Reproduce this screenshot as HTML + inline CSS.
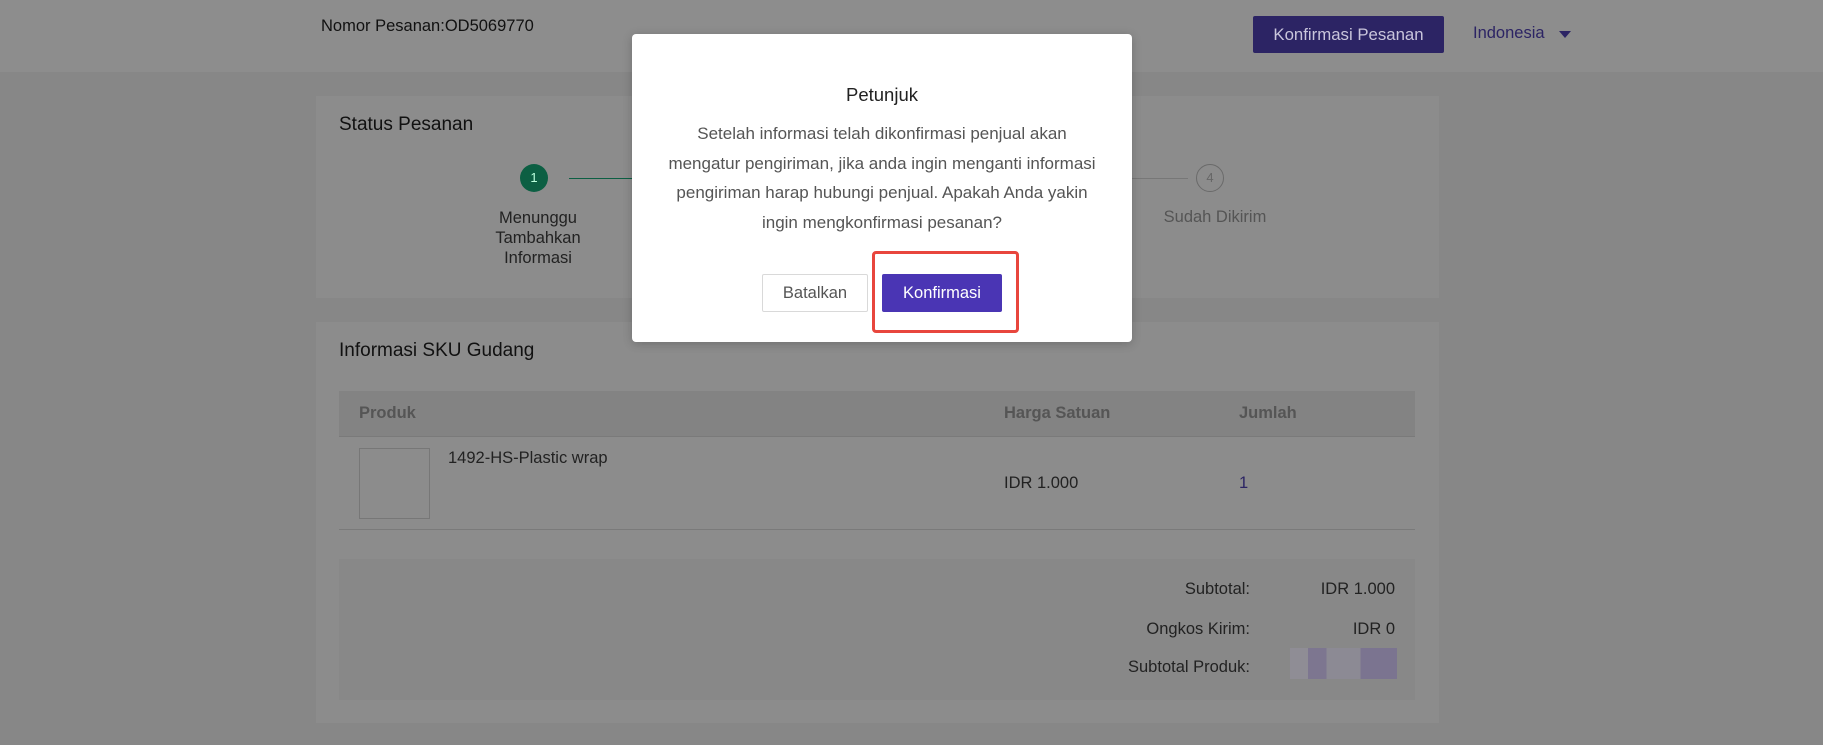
<!DOCTYPE html>
<html><head><meta charset="utf-8"><style>
*{margin:0;padding:0;box-sizing:border-box}
body{width:1823px;height:745px;background:#878787;font-family:"Liberation Sans",Arial,sans-serif;position:relative;overflow:hidden;color:#111}
.a{position:absolute;white-space:nowrap}
.hdr{position:absolute;left:0;top:0;width:1823px;height:72px;background:#8d8d8d}
.card{position:absolute;left:316px;width:1123px;background:#8c8c8c}
.circ{position:absolute;width:28px;height:28px;border-radius:50%;font-size:13px;text-align:center;line-height:28px}
.modal{position:absolute;left:632px;top:34px;width:500px;height:308px;background:#fff;border-radius:4px;box-shadow:0 2px 10px rgba(0,0,0,.2)}
</style></head><body>
<div class="hdr"></div>
<div class="a" style="left:321px;top:17px;font-size:16.5px;color:#111">Nomor Pesanan:OD5069770</div>
<div class="a" style="left:1253px;top:16px;width:191px;height:37px;background:#2c2464;color:#c9c5dc;font-size:16.8px;text-align:center;line-height:37px;border-radius:2px">Konfirmasi Pesanan</div>
<div class="a" style="left:1473px;top:24px;font-size:16.5px;color:#2c2464">Indonesia</div>
<div class="a" style="left:1559px;top:31px;width:0;height:0;border-left:6px solid transparent;border-right:6px solid transparent;border-top:7px solid #2c2464"></div>

<div class="card" style="top:96px;height:202px"></div>
<div class="a" style="left:339px;top:114px;font-size:19px;color:#111">Status Pesanan</div>
<div class="circ" style="left:520px;top:164px;background:#0c5f43;color:#bfd">1</div>
<div class="a" style="left:569px;top:178px;width:64px;height:1px;background:#0c5f43"></div>
<div class="a" style="left:1132px;top:178px;width:56px;height:1px;background:#777"></div>
<div class="circ" style="left:1196px;top:164px;border:1.5px solid #6a6a6a;color:#666;line-height:25px">4</div>
<div class="a" style="left:478px;top:208px;width:120px;text-align:center;font-size:16.5px;line-height:20px;color:#222;white-space:normal">Menunggu<br>Tambahkan<br>Informasi</div>
<div class="a" style="left:1155px;top:208px;width:120px;text-align:center;font-size:16.5px;color:#555">Sudah Dikirim</div>

<div class="card" style="top:322px;height:401px"></div>
<div class="a" style="left:339px;top:340px;font-size:19px;color:#111">Informasi SKU Gudang</div>
<div class="a" style="left:339px;top:391px;width:1076px;height:46px;background:#838383;border-bottom:1px solid #7a7a7a"></div>
<div class="a" style="left:359px;top:404px;font-size:16.5px;font-weight:bold;color:#555">Produk</div>
<div class="a" style="left:1004px;top:404px;font-size:16.5px;font-weight:bold;color:#555">Harga Satuan</div>
<div class="a" style="left:1239px;top:404px;font-size:16.5px;font-weight:bold;color:#555">Jumlah</div>
<div class="a" style="left:359px;top:448px;width:71px;height:71px;border:1.5px solid #777"></div>
<div class="a" style="left:448px;top:449px;font-size:16.5px;color:#222">1492-HS-Plastic wrap</div>
<div class="a" style="left:1004px;top:474px;font-size:16.5px;color:#222">IDR 1.000</div>
<div class="a" style="left:1239px;top:474px;font-size:16.5px;color:#2c2464">1</div>
<div class="a" style="left:339px;top:529px;width:1076px;height:1px;background:#7a7a7a"></div>
<div class="a" style="left:339px;top:559px;width:1076px;height:141px;background:#888"></div>
<div class="a" style="left:1050px;top:580px;width:200px;text-align:right;font-size:16.5px;color:#222">Subtotal:</div>
<div class="a" style="left:1250px;top:580px;width:145px;text-align:right;font-size:16.5px;color:#222">IDR 1.000</div>
<div class="a" style="left:1050px;top:620px;width:200px;text-align:right;font-size:16.5px;color:#222">Ongkos Kirim:</div>
<div class="a" style="left:1250px;top:620px;width:145px;text-align:right;font-size:16.5px;color:#222">IDR 0</div>
<div class="a" style="left:1050px;top:658px;width:200px;text-align:right;font-size:16.5px;color:#222">Subtotal Produk:</div>
<div class="a" style="left:1290px;top:648px;width:107px;height:31px;background:linear-gradient(90deg,#8f8d95 0 17%,#7d7690 17% 34%,#8c8a94 34% 66%,#7b7490 66% 100%)"></div>

<div class="modal"></div>
<div class="a" style="left:632px;top:84px;width:500px;text-align:center;font-size:18.5px;color:#222">Petunjuk</div>
<div class="a" style="left:664px;top:119px;width:436px;text-align:center;font-size:17px;line-height:29.5px;color:#555;white-space:normal">Setelah informasi telah dikonfirmasi penjual akan mengatur pengiriman, jika anda ingin menganti informasi pengiriman harap hubungi penjual. Apakah Anda yakin ingin mengkonfirmasi pesanan?</div>
<div class="a" style="left:762px;top:274px;width:106px;height:38px;border:1px solid #d9d9d9;border-radius:2px;text-align:center;line-height:36px;font-size:16.5px;color:#555">Batalkan</div>
<div class="a" style="left:882px;top:274px;width:120px;height:38px;background:#4a35b4;border-radius:2px;text-align:center;line-height:38px;font-size:16.5px;color:#fff">Konfirmasi</div>
<div class="a" style="left:872px;top:251px;width:147px;height:82px;border:3px solid #e8463d;border-radius:4px"></div>
</body></html>
